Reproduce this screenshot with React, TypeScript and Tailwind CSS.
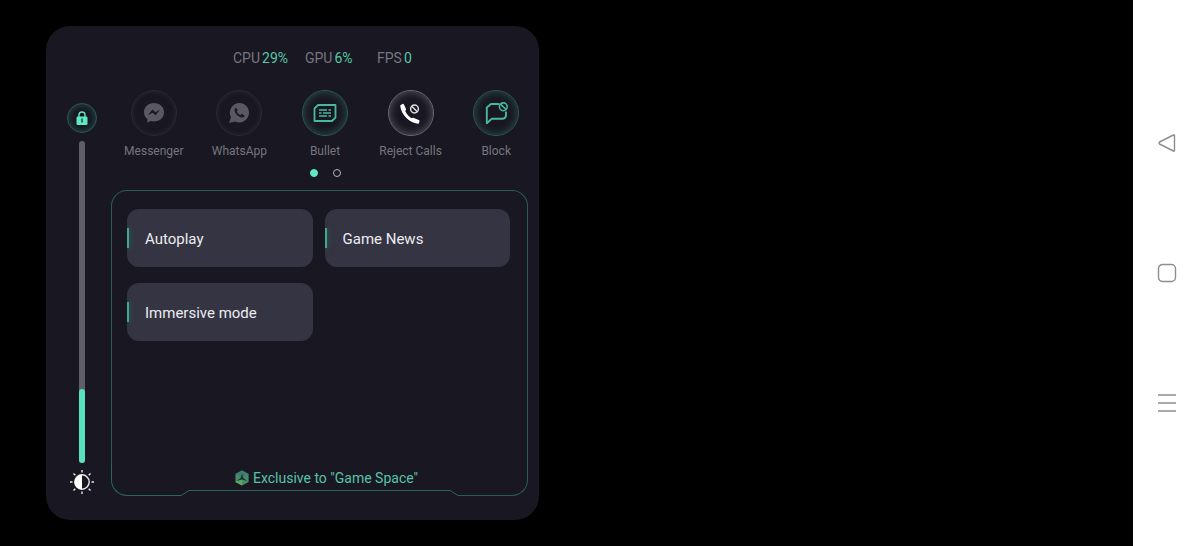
import { useState } from 'react';
import type { ReactNode } from 'react';

const stats = [
  { label: 'CPU', value: '29%' },
  { label: 'GPU', value: '6%' },
  { label: 'FPS', value: '0' },
];

const features = ['Autoplay', 'Game News', 'Immersive mode'];

const tones = {
  off: 'border-[#2a2a34] text-[#5a5963] shadow-[inset_0_0_5px_#2a2a34]',
  teal: 'border-[#2c5a55] text-[#48b99c] shadow-[inset_0_0_8px_#29504f]',
  white: 'border-[#6c6b74] text-white shadow-[inset_0_0_8px_#5c5b66]',
};

function MessengerIcon() {
  return (
    <svg viewBox="0 0 22 22" className="size-[22px]" aria-hidden="true">
      <path
        fill="currentColor"
        d="M11 1C5.200 1 1 5 1 10.200c0 2.900 1.300 5.300 3.500 7L4 20.800l3.600-1.700c1.100.3 2.200.5 3.400.5 5.800 0 10-4 10-9.300S16.800 1 11 1z"
      />
      <path fill="#1b1a25" d="M5 13.300 9.300 7.600l3.200 2.600L17 7.600l-4.300 5.700-3.200-2.600z" />
    </svg>
  );
}

function WhatsAppIcon() {
  return (
    <svg viewBox="0 0 22 22" className="size-[22px]" aria-hidden="true">
      <path fill="currentColor" d="M11.500 1A9.600 9.600 0 0 0 3 15.200L1 21l6-1.600A9.700 9.700 0 1 0 11.500 1z" />
      <path
        fill="#1b1a25"
        d="M8.200 5.800c-.9.200-1.800 1.200-1.600 2.800.3 3.200 4.100 6.800 7.300 7 1.500 0 2.500-.9 2.700-2.200l-2.800-1.700-1.300 1.300c-1.700-.7-3-2-3.700-3.600l1-1.100z"
      />
    </svg>
  );
}

function BulletIcon() {
  return (
    <svg viewBox="0 0 24 20" className="h-5 w-6" fill="none" stroke="currentColor" aria-hidden="true">
      <path strokeWidth="1.800" d="M5 2h17.500v12.500L19 18H1.500V5.500z" strokeLinejoin="round" />
      <path strokeWidth="1.500" d="M6 7h8M15.500 7h2.500M6 10h2.500M10 10h8M6 13h8M15.500 13h2.500" />
    </svg>
  );
}

function RejectIcon() {
  return (
    <svg viewBox="0 0 22 22" className="size-[22px]" fill="none" aria-hidden="true">
      <path
        fill="currentColor"
        d="M.7 3 2.600 1.900c.5-.3 1-.1 1.200.4L6 7c.2.500.1.900-.3 1.300l-.5.8c1.200 2.800 3.500 5.400 6.300 7.200l1-.4c.5-.2.900-.2 1.300 0l5 2c.6.200.8.600.7 1.100l-.5 2c-.1.600-.5.800-1.100.7C9 20.500 1.500 13 .2 4c0-.4.100-.8.500-1z"
      />
      <g stroke="currentColor" strokeWidth="1.500" opacity=".85">
        <circle cx="14.500" cy="7" r="3.900" />
        <path d="m11.800 4.300 5.400 5.400" />
      </g>
    </svg>
  );
}

function BlockIcon() {
  return (
    <svg viewBox="0 0 24 24" className="size-6" fill="none" stroke="currentColor" strokeWidth="1.900" aria-hidden="true">
      <path d="M15.500 3H7L2.800 6.500v15.800l5-4.600H18q4 0 4-4V10.500" strokeLinejoin="round" />
      <circle cx="19.300" cy="5.800" r="3.900" strokeWidth="1.600" />
      <path d="m16.600 3.100 5.400 5.400" strokeWidth="1.600" />
    </svg>
  );
}

function LockIcon() {
  return (
    <svg viewBox="0 0 12 14" className="h-3.5 w-3" aria-hidden="true">
      <path d="M3 6V4a3 3 0 0 1 6 0v2" fill="none" stroke="currentColor" strokeWidth="1.400" />
      <rect x="0.500" y="5.500" width="11" height="8.500" rx="1.200" fill="currentColor" />
      <path d="M6 8v3" stroke="#1b3a3c" strokeWidth="1.400" strokeLinecap="round" />
    </svg>
  );
}

function BrightnessIcon() {
  return (
    <svg viewBox="0 0 24 24" className="size-6" fill="none" stroke="#e8e8ea" aria-hidden="true">
      <circle cx="12" cy="12" r="7.200" strokeWidth="1.400" />
      <path d="M12 4.500a7.500 7.500 0 0 0 0 15z" fill="#fff" stroke="none" />
      <path
        strokeWidth="1.400"
        d="M12 0v2.500M12 21.500V24M0 12h2.500M21.500 12H24M3.500 3.500l1.800 1.800M18.700 18.700l1.800 1.800M3.500 20.500l1.800-1.800M18.700 5.300l1.800-1.800"
      />
    </svg>
  );
}

function GameSpaceIcon() {
  return (
    <svg viewBox="0 0 16 18" className="h-4 w-3.5" aria-hidden="true">
      <path d="M8 .5 15.500 4.500v9L8 17.500.5 13.500v-9z" fill="#4b8b68" />
      <path d="M8 .5 15.500 4.500 8 9 .5 4.500z" fill="#3f7f72" />
      <path d="M8 9v8.500l-7.500-4z" fill="#5ba56c" />
      <path d="M8 3.500 9.300 8.800 14 12.500 8 10.600 2 12.500 6.700 8.800z" fill="#16352c" />
    </svg>
  );
}

const shortcuts: { label: string; tone: keyof typeof tones; icon: ReactNode }[] = [
  { label: 'Messenger', tone: 'off', icon: <MessengerIcon /> },
  { label: 'WhatsApp', tone: 'off', icon: <WhatsAppIcon /> },
  { label: 'Bullet', tone: 'teal', icon: <BulletIcon /> },
  { label: 'Reject Calls', tone: 'white', icon: <RejectIcon /> },
  { label: 'Block', tone: 'teal', icon: <BlockIcon /> },
];

function BrightnessControl() {
  const [level, setLevel] = useState(23);

  return (
    <aside className="mr-3.5 ml-[21px] flex w-[30px] shrink-0 flex-col items-center pt-[77px] pb-[26px]">
      <button
        type="button"
        aria-label="Lock"
        className="flex size-[30px] shrink-0 items-center justify-center rounded-full border border-[#2c5a55] text-[#5fe9c3] shadow-[inset_0_0_7px_#245150]"
      >
        <LockIcon />
      </button>
      <div className="relative mt-2 mb-[7px] flex w-1.5 flex-1 flex-col justify-end rounded-full bg-[#605f67]">
        <div className="rounded-full bg-[#57e2bb]" style={{ height: `${level}%` }} />
        <input
          type="range"
          aria-label="Brightness"
          min={0}
          max={100}
          value={level}
          onChange={e => setLevel(Number(e.target.value))}
          className="absolute inset-0 m-0 h-full w-full cursor-pointer opacity-0 [direction:rtl] [writing-mode:vertical-lr]"
        />
      </div>
      <BrightnessIcon />
    </aside>
  );
}

function FeaturePanel() {
  return (
    <section className="mt-[13px] mr-[11px] flex flex-1 flex-col">
      <div className="flex-1 rounded-t-2xl border-x border-t border-[#2b5c59] pt-[18px] pr-[17px] pl-[15px]">
        <div className="grid grid-cols-2 gap-x-3 gap-y-4">
          {features.map(name => (
            <button
              key={name}
              type="button"
              className="flex h-[58px] items-center overflow-hidden rounded-xl bg-[#343442] text-left text-[15px] text-[#ececf0]"
            >
              <span className="mr-4 h-5 w-0.5 shrink-0 bg-[#3fa890] shadow-[0_0_6px_#2d6f68]" />
              <span className="pt-0.5">{name}</span>
            </button>
          ))}
        </div>
      </div>
      <div className="flex h-8 items-stretch">
        <div className="w-[70px] rounded-bl-2xl border-b border-l border-[#2b6660]" />
        <svg viewBox="0 0 8 6" className="h-1.5 w-2 self-end" fill="none" stroke="#2b6660" aria-hidden="true">
          <path d="M0 5.500 8 .5" />
        </svg>
        <p className="mb-[5px] flex flex-1 items-end justify-center gap-1 border-b border-[#2b6660] pb-0.5 pl-3.5 text-sm whitespace-nowrap text-[#58c3a8]">
          <span className="flex h-5 items-center">
            <GameSpaceIcon />
          </span>
          Exclusive to "Game Space"
        </p>
        <svg viewBox="0 0 8 6" className="h-1.5 w-2 self-end" fill="none" stroke="#2b6660" aria-hidden="true">
          <path d="M0 .5 8 5.500" />
        </svg>
        <div className="w-[70px] rounded-br-2xl border-r border-b border-[#2b5c59]" />
      </div>
    </section>
  );
}

function SystemNav() {
  return (
    <nav className="flex w-[67px] shrink-0 flex-col items-center justify-center gap-[110px] bg-white text-[#8d8d8d]">
      <button type="button" aria-label="Back">
        <svg viewBox="0 0 20 20" className="size-5" fill="none" stroke="currentColor" strokeWidth="1.400">
          <path d="M17.500 2.500v15q0 1-1 .5l-14-7q-1-1 0-2l14-7q1-.5 1 .5z" strokeLinejoin="round" />
        </svg>
      </button>
      <button type="button" aria-label="Home">
        <svg viewBox="0 0 20 20" className="size-5" fill="none" stroke="currentColor" strokeWidth="1.400">
          <rect x="1.500" y="1.500" width="17" height="17" rx="4" />
        </svg>
      </button>
      <button type="button" aria-label="Recent apps">
        <svg viewBox="0 0 20 20" className="size-5" fill="none" stroke="currentColor" strokeWidth="1.600">
          <path d="M1 2h18M1 10h18M1 18h18" />
        </svg>
      </button>
    </nav>
  );
}

export default function App() {
  const [page, setPage] = useState(0);

  return (
    <div className="flex min-h-screen bg-black font-[Roboto,sans-serif]">
      <main className="flex flex-1 py-[26px] pl-[46px]">
        <div className="flex w-full max-w-[493px] rounded-3xl bg-[#181722]">
          <BrightnessControl />
          <div className="flex flex-1 flex-col pt-[22px] pb-6">
            <dl className="flex justify-center pl-8 text-sm text-[#77767f]">
              {stats.map(s => (
                <div key={s.label} className="flex w-[72px] gap-0.5">
                  <dt>{s.label}</dt>
                  <dd className="text-[#55c8a9]">{s.value}</dd>
                </div>
              ))}
            </dl>
            <div className="mt-[22px] grid grid-cols-5">
              {shortcuts.map(s => (
                <button key={s.label} type="button" className="flex flex-col items-center gap-[7px]">
                  <span className={`flex size-[46px] items-center justify-center rounded-full border ${tones[s.tone]}`}>
                    {s.icon}
                  </span>
                  <span className="text-xs whitespace-nowrap text-[#77767f]">{s.label}</span>
                </button>
              ))}
            </div>
            <div className="mt-2.5 flex justify-center gap-[15px]">
              {[0, 1].map(i => (
                <button
                  key={i}
                  type="button"
                  aria-label={`Page ${i + 1}`}
                  onClick={() => setPage(i)}
                  className={`size-2 rounded-full border ${page === i ? 'border-[#5fe9c3] bg-[#5fe9c3]' : 'border-[#b5b5ba]'}`}
                />
              ))}
            </div>
            <FeaturePanel />
          </div>
        </div>
      </main>
      <SystemNav />
    </div>
  );
}
